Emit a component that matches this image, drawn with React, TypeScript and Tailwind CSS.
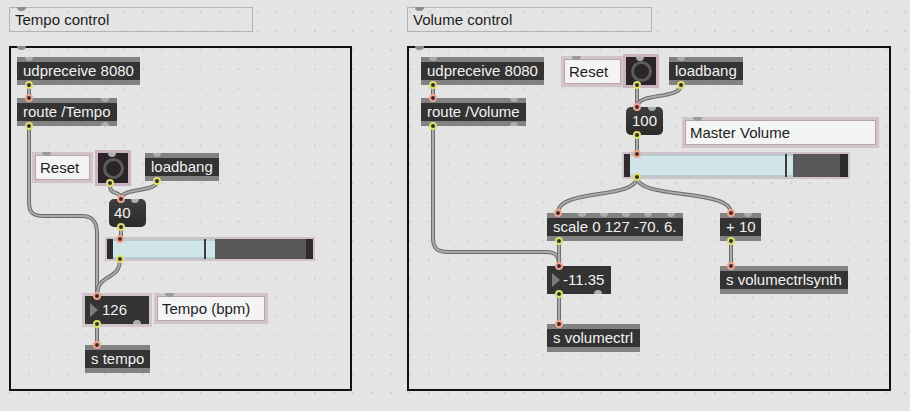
import React from 'react'

const InOn = ({ cls }: { cls: string }) => (
  <span className={`absolute -top-[4px] z-10 h-[8px] w-[8px] rounded-full border-2 border-[#f2a38e] bg-[#3a2c2c] ${cls}`} />
)
const OutOn = ({ cls }: { cls: string }) => (
  <span className={`absolute -bottom-[4px] z-10 h-[8px] w-[8px] rounded-full border-2 border-[#dede6c] bg-[#2f2f2f] ${cls}`} />
)
const InOff = ({ cls }: { cls: string }) => (
  <span className={`absolute top-0 h-[4px] w-[8px] rounded-b-full bg-[#adadad] ${cls}`} />
)
const OutOff = ({ cls }: { cls: string }) => (
  <span className={`absolute bottom-0 h-[4px] w-[8px] rounded-t-full bg-[#adadad] ${cls}`} />
)

// plain object box: grey strips top and bottom, dark body
function Obj({ cls, text, children }: { cls: string; text: string; children?: React.ReactNode }) {
  return (
    <div className={`absolute h-[28px] bg-[#333] ${cls}`}>
      <div className="absolute inset-x-0 top-0 h-[5px] bg-[#828282]" />
      <div className="absolute inset-x-0 bottom-0 h-[5px] bg-[#828282]" />
      <span className="relative block whitespace-nowrap pl-[6px] text-[15px] leading-[28px] text-[#f2f2f2]">{text}</span>
      {children}
    </div>
  )
}

// message box, rounded
function Msg({ cls, text, children }: { cls: string; text: string; children?: React.ReactNode }) {
  return (
    <div className={`absolute h-[28px] rounded-[5px] bg-linear-to-b from-[#3e3e3e] to-[#2b2b2b] ${cls}`}>
      <span className="block whitespace-nowrap text-[15px] leading-[27px] text-[#f2f2f2]">{text}</span>
      {children}
    </div>
  )
}

// comment with the pinkish presentation frame
function Note({ cls, text, dot }: { cls: string; text: string; dot: string }) {
  return (
    <div className={`absolute bg-[#d3c3cb] p-[3px] ${cls}`}>
      <span className={`absolute top-0 h-[4px] w-[9px] rounded-b-full bg-[#9b9b9b] ${dot}`} />
      <div className="h-full whitespace-nowrap border border-[#b8a2ae] bg-[#f4f4f4] pl-[4px] text-[15px] leading-[23px] text-[#1e1e1e]">
        {text}
      </div>
    </div>
  )
}

function Title({ cls, text }: { cls: string; text: string }) {
  return (
    <div className={`absolute h-[25px] border border-[#b4b4b4] pl-[5px] text-[15px] leading-[23px] text-[#1c1c1c] ${cls}`}>
      <span className="absolute -top-px left-[7px] h-[4px] w-[9px] rounded-b-full bg-[#8e8e8e]" />
      {text}
    </div>
  )
}

function Bang({ cls, inner, children }: { cls: string; inner: string; children?: React.ReactNode }) {
  return (
    <div className={`absolute bg-[#cbb4c1] p-[3px] ${cls}`}>
      <div className={`relative flex items-center justify-center bg-[#2b2428] ${inner}`}>
        <span className="h-[21px] w-[21px] rounded-full border-[3px] border-[#5b5b5b]" />
        {children}
      </div>
    </div>
  )
}

const Tri = () => (
  <span className="absolute left-[5px] top-[7px] h-0 w-0 border-y-[7px] border-l-[8px] border-y-transparent border-l-[#7c7c7c]" />
)

function Slider({ cls, blue, line, grey }: { cls: string; blue: string; line: string; grey: string }) {
  return (
    <div className={`absolute bg-[#d1c1c9] p-[2px] ${cls}`}>
      <div className="relative flex h-full">
        <div className="w-[6px] bg-[#2e2a2d]" />
        <div className={`relative border-y-2 border-[#b7cace] bg-[#cfe5e7] ${blue}`}>
          <div className={`absolute -top-[2px] -bottom-[2px] w-[2px] bg-[#3c3c3c] ${line}`} />
        </div>
        <div className={`bg-[#585858] ${grey}`} />
        <div className="flex-1 bg-[#2e2a2d]" />
        <InOn cls="left-[9px]" />
        <OutOn cls="left-[9px]" />
      </div>
    </div>
  )
}

const cords = [
  'M29 85 L29 98',
  'M29 126 L29 202 C29 213 33 216 44 216 L82 216 C93 216 97 222 97 234 L97 296',
  'M110 186 C110 196 121 190 121 199',
  'M157 181 C157 193 121 187 121 199',
  'M121 227 L121 239',
  'M120 259 C120 282 97 272 97 296',
  'M97 324 L97 346',
  'M433 85 L433 98',
  'M433 126 L433 238 C433 248 437 252 448 252 L546 252 C556 252 559 256 559 266',
  'M637 85 L637 107',
  'M681 85 C681 100 637 92 637 107',
  'M637 135 L637 154',
  'M637 177 C637 200 558 188 558 213',
  'M637 177 C637 200 731 188 731 213',
  'M559 241 L559 266',
  'M559 294 L559 324',
  'M731 241 L731 266',
]

export default function App() {
  return (
    <div className="relative h-[411px] w-[910px] overflow-hidden bg-[#e4e4e4] bg-[radial-gradient(circle,#cacaca_0.6px,transparent_1px)] bg-[length:19.05px_19.05px] bg-[position:0.5px_2.5px] font-['Liberation_Sans',Arial,sans-serif]">
      {/* patcher frames */}
      <div className="absolute left-[9px] top-[46px] h-[345px] w-[343px] border-2 border-[#111]">
        <span className="absolute -top-[2px] left-[6px] h-[4px] w-[9px] rounded-b-full bg-[#8e8e8e]" />
      </div>
      <div className="absolute left-[407px] top-[46px] h-[345px] w-[484px] border-2 border-[#111]">
        <span className="absolute -top-[2px] left-[6px] h-[4px] w-[9px] rounded-b-full bg-[#8e8e8e]" />
      </div>

      <Title cls="left-[9px] top-[7px] w-[244px]" text="Tempo control" />
      <Title cls="left-[407px] top-[7px] w-[245px]" text="Volume control" />

      {/* patch cords */}
      <svg className="absolute inset-0" width="910" height="411">
        {cords.map((d, i) => (
          <g key={i} fill="none" strokeLinecap="round">
            <path d={d} stroke="#6c6c6c" strokeWidth={4} />
            <path d={d} stroke="#ababab" strokeWidth={2} />
          </g>
        ))}
      </svg>

      {/* Tempo control */}
      <Obj cls="left-[17px] top-[57px] w-[123px]" text="udpreceive 8080">
        <InOff cls="left-[8px]" />
        <OutOn cls="left-[8px]" />
      </Obj>
      <Obj cls="left-[17px] top-[98px] w-[100px]" text="route /Tempo">
        <InOn cls="left-[8px]" />
        <InOff cls="left-[84px]" />
        <OutOn cls="left-[8px]" />
        <OutOff cls="left-[84px]" />
      </Obj>
      <Note cls="left-[32px] top-[152px] h-[31px] w-[61px]" text="Reset" dot="left-[10px]" />
      <Bang cls="left-[95px] top-[150px]" inner="h-[30px] w-[30px]">
        <InOff cls="left-[10px] bg-[#777]" />
        <OutOn cls="left-[8px]" />
      </Bang>
      <Obj cls="left-[145px] top-[153px] w-[74px]" text="loadbang">
        <InOff cls="left-[8px]" />
        <OutOn cls="left-[8px]" />
      </Obj>
      <Msg cls="left-[109px] top-[199px] w-[37px] pl-[5px]" text="40">
        <InOn cls="left-[8px]" />
        <InOff cls="left-[22px] bg-[#6a6a6a]" />
        <OutOn cls="left-[8px]" />
      </Msg>
      <Slider cls="left-[105px] top-[237px] h-[24px] w-[210px]" blue="w-[102px]" line="left-[91px]" grey="w-[91px]" />
      <div className="absolute left-[82px] top-[293px] h-[34px] w-[70px] bg-[#d3c3cb] p-[3px]">
        <div className="relative h-full bg-[#333]">
          <Tri />
          <span className="absolute left-[17px] text-[15px] leading-[28px] text-[#f2f2f2]">126</span>
          <InOn cls="left-[8px]" />
          <OutOn cls="left-[8px]" />
          <OutOff cls="left-[48px] bg-[#555]" />
        </div>
      </div>
      <Note cls="left-[154px] top-[293px] h-[31px] w-[114px]" text="Tempo (bpm)" dot="left-[11px]" />
      <Obj cls="left-[85px] top-[345px] w-[65px]" text="s tempo">
        <InOn cls="left-[8px]" />
      </Obj>

      {/* Volume control */}
      <Obj cls="left-[421px] top-[57px] w-[123px]" text="udpreceive 8080">
        <InOff cls="left-[8px]" />
        <OutOn cls="left-[8px]" />
      </Obj>
      <Obj cls="left-[421px] top-[98px] w-[105px]" text="route /Volume">
        <InOn cls="left-[8px]" />
        <InOff cls="left-[89px]" />
        <OutOn cls="left-[8px]" />
        <OutOff cls="left-[89px]" />
      </Obj>
      <Note cls="left-[561px] top-[56px] h-[31px] w-[63px]" text="Reset" dot="left-[11px]" />
      <Bang cls="left-[623px] top-[54px]" inner="h-[28px] w-[30px]">
        <InOff cls="left-[10px] bg-[#777]" />
        <OutOn cls="left-[7px]" />
      </Bang>
      <Obj cls="left-[669px] top-[57px] w-[74px]" text="loadbang">
        <InOff cls="left-[8px]" />
        <OutOn cls="left-[8px]" />
      </Obj>
      <Msg cls="left-[626px] top-[107px] w-[37px] pl-[6px]" text="100">
        <InOn cls="left-[7px]" />
        <InOff cls="left-[22px] bg-[#6a6a6a]" />
        <OutOn cls="left-[7px]" />
      </Msg>
      <Note cls="left-[682px] top-[117px] h-[31px] w-[197px]" text="Master Volume" dot="left-[11px]" />
      <Slider cls="left-[622px] top-[152px] h-[27px] w-[228px]" blue="w-[163px]" line="left-[155px]" grey="w-[47px]" />
      <Obj cls="left-[547px] top-[213px] w-[136px]" text="scale 0 127 -70. 6.">
        <InOn cls="left-[7px]" />
        <InOff cls="left-[31px]" />
        <InOff cls="left-[53px]" />
        <InOff cls="left-[75px]" />
        <InOff cls="left-[97px]" />
        <InOff cls="left-[120px]" />
        <OutOn cls="left-[8px]" />
      </Obj>
      <Obj cls="left-[720px] top-[213px] w-[41px]" text="+ 10">
        <InOn cls="left-[7px]" />
        <InOff cls="left-[24px]" />
        <OutOn cls="left-[7px]" />
      </Obj>
      <div className="absolute left-[547px] top-[266px] h-[28px] w-[64px] bg-[#333]">
        <Tri />
        <span className="absolute left-[16px] whitespace-nowrap text-[15px] leading-[28px] text-[#f2f2f2]">-11.35</span>
        <InOn cls="left-[8px]" />
        <OutOn cls="left-[8px]" />
        <OutOff cls="left-[47px] bg-[#555]" />
      </div>
      <Obj cls="left-[720px] top-[266px] w-[128px]" text="s volumectrlsynth">
        <InOn cls="left-[7px]" />
      </Obj>
      <Obj cls="left-[547px] top-[324px] w-[93px]" text="s volumectrl">
        <InOn cls="left-[8px]" />
      </Obj>
    </div>
  )
}
